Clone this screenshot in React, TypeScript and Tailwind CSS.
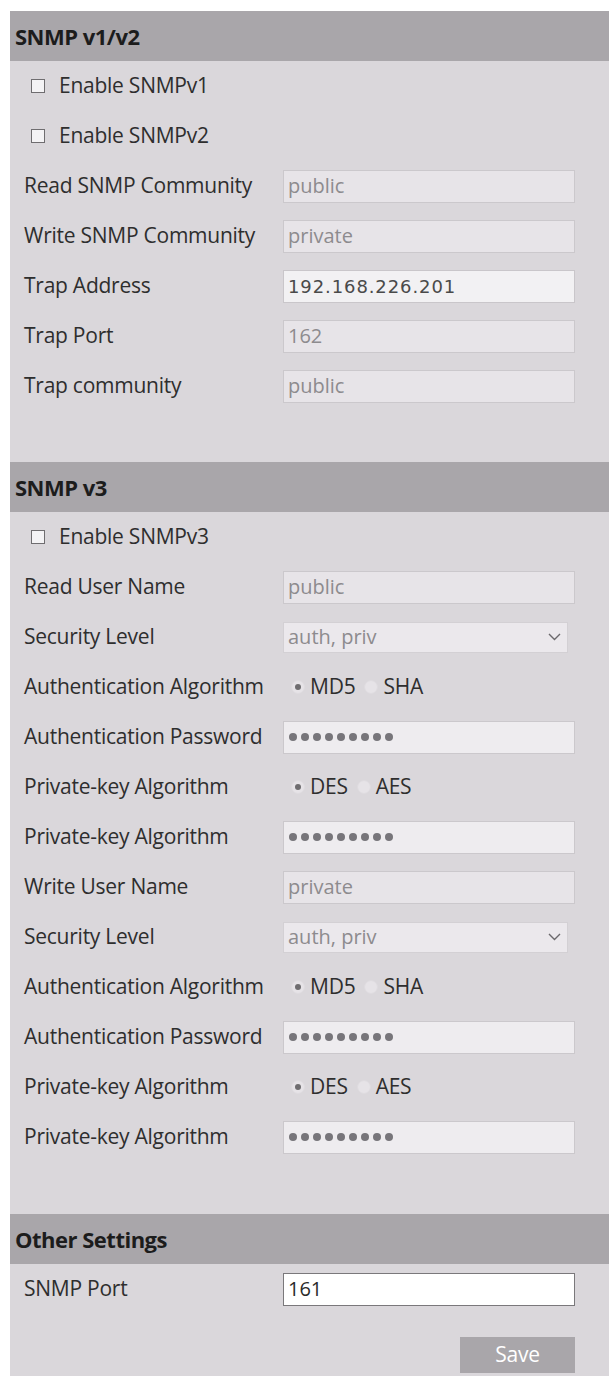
import type { ReactNode } from "react";

const FONT = "font-['Open_Sans','Noto_Sans',sans-serif]";

function SectionHeader({ title }: { title: string }) {
  return (
    <div className="h-[50px] flex items-center pl-[5px] bg-[#a9a6aa]">
      <h2 className="text-[22px] font-bold text-[#1c1c1c] tracking-[-0.5px]">{title}</h2>
    </div>
  );
}

function Row({ label, children }: { label: string; children?: ReactNode }) {
  return (
    <div className="h-[50px] flex items-center pl-[14px]">
      <span className="w-[259px] shrink-0 text-[21px] text-[#2e2e2e] tracking-[-0.25px]">{label}</span>
      {children}
    </div>
  );
}

function CheckRow({ label }: { label: string }) {
  return (
    <div className="h-[50px] flex items-center pl-[21px] gap-[14px]">
      <span className="w-[14px] h-[14px] border border-[#6f6d70] bg-[#f4f3f5]" />
      <span className="text-[21px] text-[#2e2e2e] tracking-[-0.25px]">{label}</span>
    </div>
  );
}

function TextBox({ value, variant = "disabled" }: { value: string; variant?: "disabled" | "enabled" | "active" }) {
  const box =
    variant === "active"
      ? "bg-white border-[#7a787b] text-[#2a2a2a] text-[20px]"
      : variant === "enabled"
        ? "bg-[#f2f1f3] border-[#c9c6ca] text-[#4a4a4a] font-['DejaVu_Sans',sans-serif] text-[18px] tracking-[0.9px]"
        : "bg-[#e7e4e8] border-[#cbc8cc] text-[#8d8b8e] text-[20px]";
  return (
    <div className={`w-[292px] h-[33px] border flex items-center pl-[4px] ${box}`}>
      {value}
    </div>
  );
}

function PasswordBox() {
  return (
    <div className="w-[292px] h-[33px] border border-[#cbc8cc] bg-[#eeecef] flex items-center pl-[5px] gap-[4px]">
      {Array.from({ length: 9 }).map((_, i) => (
        <span key={i} className="w-[8px] h-[8px] rounded-full bg-[#77757a]" />
      ))}
    </div>
  );
}

function SelectBox({ value }: { value: string }) {
  return (
    <div className="w-[285px] h-[31px] border border-[#d3d0d4] bg-[#ebe8ec] flex items-center justify-between pl-[4px] pr-[6px] text-[20px] text-[#8d8b8e]">
      <span>{value}</span>
      <svg width="13" height="8" viewBox="0 0 13 8" fill="none">
        <path d="M1 1l5.5 5.5L12 1" stroke="#6b696c" strokeWidth="1.4" />
      </svg>
    </div>
  );
}

function Radio({ checked }: { checked?: boolean }) {
  return (
    <span className="w-[14px] h-[14px] rounded-full bg-[#e6e3e7] border border-[#dedbdf] flex items-center justify-center">
      {checked && <span className="w-[6px] h-[6px] rounded-full bg-[#6f6d70]" />}
    </span>
  );
}

function RadioGroup({ options }: { options: [string, string] }) {
  return (
    <div className="flex items-center pl-[8px] text-[21px] text-[#2e2e2e] tracking-[-0.25px]">
      <Radio checked />
      <span className="ml-[5px]">{options[0]}</span>
      <span className="ml-[9px]">
        <Radio />
      </span>
      <span className="ml-[5px]">{options[1]}</span>
    </div>
  );
}

function UserBlock({ user }: { user: string }) {
  return (
    <>
      <Row label={user === "public" ? "Read User Name" : "Write User Name"}>
        <TextBox value={user} />
      </Row>
      <Row label="Security Level">
        <SelectBox value="auth, priv" />
      </Row>
      <Row label="Authentication Algorithm">
        <RadioGroup options={["MD5", "SHA"]} />
      </Row>
      <Row label="Authentication Password">
        <PasswordBox />
      </Row>
      <Row label="Private-key Algorithm">
        <RadioGroup options={["DES", "AES"]} />
      </Row>
      <Row label="Private-key Algorithm">
        <PasswordBox />
      </Row>
    </>
  );
}

export default function App() {
  return (
    <div className={`min-h-[1376px] bg-white pt-[11px] pl-[10px] ${FONT}`}>
      <div className="bg-[#dad7db] min-h-[1365px]">
        <SectionHeader title="SNMP v1/v2" />
        <div className="pb-[51px]">
          <CheckRow label="Enable SNMPv1" />
          <CheckRow label="Enable SNMPv2" />
          <Row label="Read SNMP Community">
            <TextBox value="public" />
          </Row>
          <Row label="Write SNMP Community">
            <TextBox value="private" />
          </Row>
          <Row label="Trap Address">
            <TextBox value="192.168.226.201" variant="enabled" />
          </Row>
          <Row label="Trap Port">
            <TextBox value="162" />
          </Row>
          <Row label="Trap community">
            <TextBox value="public" />
          </Row>
        </div>

        <SectionHeader title="SNMP v3" />
        <div className="pb-[52px]">
          <CheckRow label="Enable SNMPv3" />
          <UserBlock user="public" />
          <UserBlock user="private" />
        </div>

        <SectionHeader title="Other Settings" />
        <Row label="SNMP Port">
          <TextBox value="161" variant="active" />
        </Row>
        <div className="flex justify-end pr-[34px] pt-[23px]">
          <button className="w-[115px] h-[36px] bg-[#a9a6aa] text-white text-[21px] tracking-[-0.3px]">
            Save
          </button>
        </div>
      </div>
    </div>
  );
}
